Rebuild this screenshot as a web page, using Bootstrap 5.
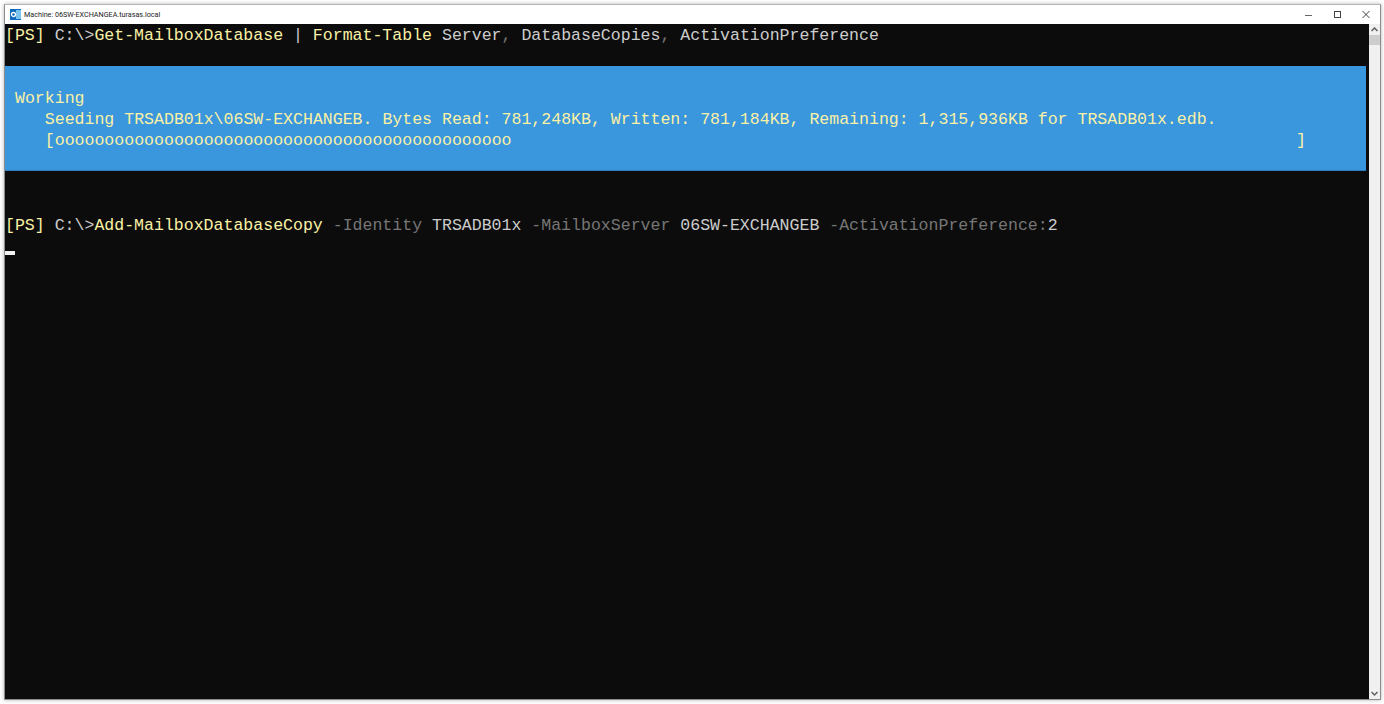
<!DOCTYPE html>
<html lang="en">
<head>
<meta charset="utf-8">
<title>Machine</title>
<link href="https://cdn.jsdelivr.net/npm/bootstrap@5.3.0/dist/css/bootstrap.min.css" rel="stylesheet">
<style>
html,body{height:704px;overflow:hidden;background:#fff}
.shell-window{height:696px;margin:4px 3px 4px 4px;border:1px solid #8c8c8c;border-top-color:#b5b5b5;background:#fff;box-shadow:0 0 4px rgba(0,0,0,.3)}
.title-strip{height:19px;font:7.2px/19px Roboto,"Liberation Sans",sans-serif;color:#222}
.app-logo{width:11px;height:11px;margin:0 3px 0 5px}
.win-btn{width:28px;height:19px}
.term-pane{background:#0c0c0c;font:16.56px/21px "Liberation Mono",monospace;color:#ccc;min-width:0}
.term-row{height:21px;padding-top:1px;color:#ccc;white-space:pre}
.term-gap{height:22px}
.progress-block{background:#3a96dd;border-bottom:1px solid #2f7fbd;height:105px;margin-right:3px;color:#f9f1a5;padding:21px 0 0 10px}
.progress-block .term-row{color:inherit}
.y{color:#f9f1a5}.g{color:#767676}
.caret-row{height:20px;align-items:flex-end}
.caret-mark{width:10px;height:4px;background:#f2f2f2}
.scroll-rail{width:11px;background:#f0f0f0}
.rail-end{height:11px}
.rail-thumb{height:10px;background:#cdcdcd}
</style>
</head>
<body>
<div class="shell-window d-flex flex-column">
  <div class="title-strip d-flex align-items-center flex-shrink-0">
    <svg class="app-logo" viewBox="0 0 11 11"><rect width="11" height="11" fill="#0f6cbd"/><rect x="6" y="1" width="5" height="9" fill="#7cc4f0"/><circle cx="3.5" cy="5.5" r="2" fill="none" stroke="#fff" stroke-width="1.3"/></svg>
    <span class="flex-grow-1">Machine: 06SW-EXCHANGEA.turasas.local</span>
    <svg class="win-btn" viewBox="0 0 28 19"><path d="M9 10.5h7" stroke="#666" fill="none"/></svg>
    <svg class="win-btn" viewBox="0 0 28 19"><rect x="10.5" y="6.5" width="6" height="6" stroke="#444" fill="none"/></svg>
    <svg class="win-btn" viewBox="0 0 28 19"><path d="M10.5 6l7 7M17.5 6l-7 7" stroke="#444" fill="none"/></svg>
  </div>
  <div class="d-flex flex-grow-1 overflow-hidden">
    <div class="term-pane flex-grow-1 overflow-hidden">
      <div class="term-row"><span class="y">[PS]</span> C:\&gt;<span class="y">Get-MailboxDatabase</span> | <span class="y">Format-Table</span> Server<span class="g">,</span> DatabaseCopies<span class="g">,</span> ActivationPreference</div>
      <div class="term-row"></div>
      <div class="progress-block">
        <div class="term-row">Working</div>
        <div class="term-row">   Seeding TRSADB01x\06SW-EXCHANGEB. Bytes Read: 781,248KB, Written: 781,184KB, Remaining: 1,315,936KB for TRSADB01x.edb.</div>
        <div class="term-row">   [oooooooooooooooooooooooooooooooooooooooooooooo                                                                               ]</div>
      </div>
      <div class="term-row"></div>
      <div class="term-gap"></div>
      <div class="term-row"><span class="y">[PS]</span> C:\&gt;<span class="y">Add-MailboxDatabaseCopy</span> <span class="g">-Identity</span> TRSADB01x <span class="g">-MailboxServer</span> 06SW-EXCHANGEB <span class="g">-ActivationPreference:</span>2</div>
      <div class="caret-row d-flex"><div class="caret-mark"></div></div>
    </div>
    <div class="scroll-rail d-flex flex-column flex-shrink-0">
      <svg class="rail-end" viewBox="0 0 11 11"><path d="M2.5 7l3-3 3 3" stroke="#606060" stroke-width="1.5" fill="none"/></svg>
      <div class="rail-thumb"></div>
      <div class="flex-grow-1"></div>
      <svg class="rail-end" viewBox="0 0 11 11"><path d="M2.5 4l3 3 3-3" stroke="#606060" stroke-width="1.5" fill="none"/></svg>
    </div>
  </div>
</div>
<script src="https://cdn.jsdelivr.net/npm/bootstrap@5.3.0/dist/js/bootstrap.bundle.min.js"></script>
</body>
</html>
